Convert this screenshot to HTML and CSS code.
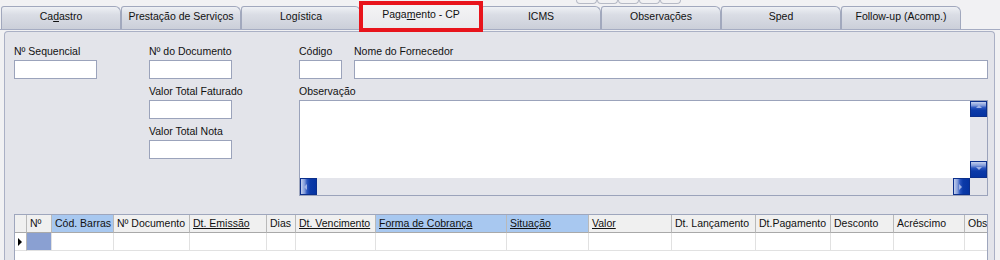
FILE: index.html
```html
<!DOCTYPE html>
<html lang="pt">
<head>
<meta charset="utf-8">
<title>Pagamento - CP</title>
<link rel="stylesheet" href="styles.css">
</head>
<body>
<div class="window">
  <div class="topbits"><span></span><span></span><span></span><span></span><span></span></div>
  <div class="tabs">
    <div class="tab">Ca<u>d</u>astro</div>
    <div class="tab">Prestação de Serviços</div>
    <div class="tab">Logística</div>
    <div class="tab active">Paga<u>m</u>ento - CP</div>
    <div class="tab">ICMS</div>
    <div class="tab">Observações</div>
    <div class="tab">Sped</div>
    <div class="tab">Follow-up (Acomp.)</div>
  </div>
  <div class="highlight"></div>
  <div class="panel">
    <div class="form">
      <div class="col c1">
        <div class="field">
          <label class="lbl">Nº Sequencial</label>
          <div class="input w83"></div>
        </div>
      </div>
      <div class="col c2">
        <div class="field">
          <label class="lbl">Nº do Documento</label>
          <div class="input w83"></div>
        </div>
        <div class="field">
          <label class="lbl">Valor Total Faturado</label>
          <div class="input w83"></div>
        </div>
        <div class="field">
          <label class="lbl">Valor Total Nota</label>
          <div class="input w83"></div>
        </div>
      </div>
      <div class="col c3">
        <div class="row">
          <div class="field codigo">
            <label class="lbl">Código</label>
            <div class="input"></div>
          </div>
          <div class="field nome">
            <label class="lbl">Nome do Fornecedor</label>
            <div class="input"></div>
          </div>
        </div>
        <div class="field">
          <label class="lbl">Observação</label>
          <div class="memo">
            <div class="memo-text"></div>
            <div class="vscroll">
              <div class="sbtn up"><span class="arr arr-up"></span></div>
              <div class="sbtn down"><span class="arr arr-down"></span></div>
            </div>
            <div class="hscroll">
              <div class="sbtn left"><span class="arr arr-left"></span></div>
              <div class="sbtn right"><span class="arr arr-right"></span></div>
            </div>
            <div class="corner"></div>
          </div>
        </div>
      </div>
    </div>
    <div class="grid">
      <div class="grow head">
        <div class="cell ind"></div>
        <div class="cell w25">Nº</div>
        <div class="cell w62 sel">Cód. Barras</div>
        <div class="cell w76">Nº Documento</div>
        <div class="cell w77"><u>Dt. Emissão</u></div>
        <div class="cell w29">Dias</div>
        <div class="cell w80"><u>Dt. Vencimento</u></div>
        <div class="cell w131 sel"><u>Forma de Cobrança</u></div>
        <div class="cell w82 sel"><u>Situação</u></div>
        <div class="cell w83"><u>Valor</u></div>
        <div class="cell w84">Dt. Lançamento</div>
        <div class="cell w75">Dt.Pagamento</div>
        <div class="cell w63">Desconto</div>
        <div class="cell w71">Acréscimo</div>
        <div class="cell w40">Obs</div>
      </div>
      <div class="grow data">
        <div class="cell ind"><span class="tri"></span></div>
        <div class="cell w25 cur"></div>
        <div class="cell w62"></div>
        <div class="cell w76"></div>
        <div class="cell w77"></div>
        <div class="cell w29"></div>
        <div class="cell w80"></div>
        <div class="cell w131"></div>
        <div class="cell w82"></div>
        <div class="cell w83"></div>
        <div class="cell w84"></div>
        <div class="cell w75"></div>
        <div class="cell w63"></div>
        <div class="cell w71"></div>
        <div class="cell w40"></div>
      </div>
    </div>
  </div>
</div>
</body>
</html>
```
FILE: styles.css
```css
* { box-sizing: border-box; }
html, body { margin: 0; padding: 0; }
body {
  width: 1000px;
  height: 260px;
  overflow: hidden;
  background: #f1f1f3;
  font-family: "Liberation Sans", Arial, sans-serif;
  font-size: 10.5px;
  color: #111;
}
.window { position: relative; height: 260px; display: flex; flex-direction: column; }

.topbits {
  position: absolute;
  left: 576px;
  top: 0;
  display: flex;
}
.topbits span {
  width: 21px;
  height: 4px;
  border: 1px solid #b6bac6;
  border-top: none;
  border-radius: 0 0 6px 6px;
}

.tabs {
  height: 30px;
  flex: none;
  display: flex;
  align-items: flex-end;
  padding-left: 1px;
  border-bottom: 1px solid #a5acc2;
}
.tab {
  width: 120px;
  height: 23px;
  border: 1px solid #a1a8bd;
  border-bottom: none;
  border-radius: 3px 6px 0 0;
  background: linear-gradient(to bottom, #eef0f4 0%, #dadde5 35%, #cbcfd9 100%);
  text-align: center;
  line-height: 19px;
  white-space: nowrap;
}
.tab.active {
  height: 26px;
  background: linear-gradient(to bottom, #f4f4f6 0%, #e9e9ec 100%);
  line-height: 21px;
}

.highlight {
  position: absolute;
  left: 359px;
  top: 1px;
  width: 124px;
  height: 31px;
  border: 4px solid #e8141c;
}

.panel {
  flex: 1;
  margin: 1px 5px 0 4px;
  border: 1px solid #aab0c5;
  border-bottom: none;
  border-radius: 4px 4px 0 0;
  background: #e3e4ea;
  padding: 12px 6px 0 9px;
  display: flex;
  flex-direction: column;
  overflow: hidden;
}

.form { display: flex; }
.col { display: flex; flex-direction: column; gap: 5px; }
.c1 { width: 135px; }
.c2 { width: 150px; }
.c3 { flex: 1; }
.row { display: flex; gap: 12px; }
.field { display: flex; flex-direction: column; }
.lbl {
  display: block;
  height: 14px;
  line-height: 14px;
  margin-bottom: 2px;
  white-space: nowrap;
}
.input {
  height: 19px;
  background: #fff;
  border: 1px solid #9ba3bb;
}
.w83 { width: 83px; }
.codigo { width: 43px; }
.nome { flex: 1; }

.memo {
  height: 96px;
  border: 1px solid #9ba3bb;
  display: grid;
  grid-template-columns: 1fr 17px;
  grid-template-rows: 1fr 17px;
  background: #e3e4ea;
}
.memo-text { background: #fff; }
.vscroll {
  display: flex;
  flex-direction: column;
  justify-content: space-between;
  background: #e4e5eb;
}
.hscroll {
  display: flex;
  justify-content: space-between;
  background: #e4e5eb;
}
.corner { background: #e3e4ea; }
.sbtn {
  width: 17px;
  height: 17px;
  border: 1px solid #0b2f8c;
  display: flex;
  align-items: center;
  justify-content: center;
}
.sbtn.up, .sbtn.down {
  height: 16px;
  background: linear-gradient(to bottom, #c4d0ee 0%, #7e98d8 25%, #2a55c0 40%, #0b3aa8 60%, #0533a2 100%);
}
.sbtn.down { height: 17px; }
.sbtn.left, .sbtn.right {
  background: linear-gradient(to right, #c4d0ee 0%, #7e98d8 25%, #2a55c0 40%, #0b3aa8 60%, #0533a2 100%);
}
.arr { width: 0; height: 0; display: block; }
.arr-up {
  border-left: 3px solid transparent;
  border-right: 3px solid transparent;
  border-bottom: 3px solid #9fb2e4;
  margin-bottom: 6px;
}
.arr-down {
  border-left: 3px solid transparent;
  border-right: 3px solid transparent;
  border-top: 3px solid #9fb2e4;
  margin-bottom: 2px;
}
.arr-left {
  border-top: 3px solid transparent;
  border-bottom: 3px solid transparent;
  border-right: 3px solid #9fb2e4;
  margin-right: 6px;
}
.arr-right {
  border-top: 3px solid transparent;
  border-bottom: 3px solid transparent;
  border-left: 3px solid #9fb2e4;
  margin-right: 2px;
}

.grid {
  margin-top: 18px;
  width: 974px;
  flex: 1;
  background: #fff;
  border: 1px solid #9ea6bd;
  border-bottom: none;
  overflow: hidden;
}
.grow { display: flex; height: 18px; }
.cell {
  flex: none;
  height: 18px;
  line-height: 17px;
  padding-left: 3px;
  white-space: nowrap;
  overflow: hidden;
}
.head .cell {
  background: #f0f0f0;
  border-right: 1px solid #b9b9b9;
  border-bottom: 1px solid #a9a9a9;
}
.head .cell.sel { background: #a8c8f0; }
.data .cell {
  border-right: 1px solid #e1e1e1;
  border-bottom: 1px solid #e1e1e1;
}
.data .cell.ind { border-right: 1px solid #b9b9b9; }
.data .cell.cur { background: #8aa0d2; }
.ind { width: 12px; padding: 0; display: flex; align-items: center; }
.tri {
  display: block;
  width: 0; height: 0;
  margin-left: 3px;
  border-top: 4px solid transparent;
  border-bottom: 4px solid transparent;
  border-left: 4px solid #000;
}
.w25 { width: 25px; }
.w29 { width: 29px; }
.w40 { width: 40px; }
.w62 { width: 62px; }
.w63 { width: 63px; }
.w71 { width: 71px; }
.w75 { width: 75px; }
.w76 { width: 76px; }
.w77 { width: 77px; }
.w80 { width: 80px; }
.w82 { width: 82px; }
.w83 { width: 83px; }
.w84 { width: 84px; }
.w131 { width: 131px; }
```
